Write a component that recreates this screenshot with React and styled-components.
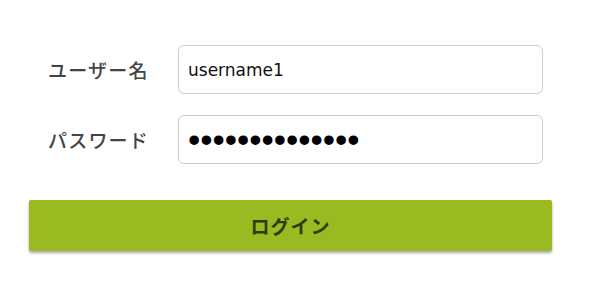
import React from 'react';
import styled, { createGlobalStyle } from 'styled-components';

const GlobalStyle = createGlobalStyle`
    body {
        margin: 0;
        background: #fff;
        font-family: "Noto Sans CJK JP", "Noto Sans", sans-serif;
    }
`;

const Form = styled.form`
    width: 602px;
    height: 296px;
    box-sizing: border-box;
    padding: 45px 50px 0 29px;
    display: flex;
    flex-direction: column;
`;

const Row = styled.div`
    display: flex;
    align-items: center;
    margin-bottom: ${props => props.last ? '36px' : '21px'};
`;

const Label = styled.label`
    width: 149px;
    padding-left: 19px;
    box-sizing: border-box;
    font-size: 19px;
    font-weight: 500;
    color: #444;
    letter-spacing: 1.2px;
`;

const Input = styled.input`
    width: 365px;
    height: 49px;
    box-sizing: border-box;
    border: 1px solid #ccc;
    border-radius: 6px;
    padding: 0 9px;
    font-family: "DejaVu Sans", sans-serif;
    font-size: 17px;
    color: #111;
    outline: none;

    &[type="password"] {
        font-family: "Liberation Sans", sans-serif;
        font-size: 35px;
        color: #000;
    }
`;

const Button = styled.button`
    width: 523px;
    height: 51px;
    border: none;
    border-radius: 2px;
    background: #9aba22;
    box-shadow: 0 2px 3px rgba(0, 0, 0, 0.35);
    color: #2e3a08;
    font-family: "Noto Sans CJK JP", sans-serif;
    font-size: 19px;
    font-weight: bold;
    letter-spacing: 1px;
    cursor: pointer;
`;

const App = () => (
    <>
        <GlobalStyle />
        <Form onSubmit={e => e.preventDefault()}>
            <Row>
                <Label>ユーザー名</Label>
                <Input type="text" defaultValue="username1" />
            </Row>
            <Row last>
                <Label>パスワード</Label>
                <Input type="password" defaultValue="password123456" />
            </Row>
            <Button type="submit">ログイン</Button>
        </Form>
    </>
);

export default App;
